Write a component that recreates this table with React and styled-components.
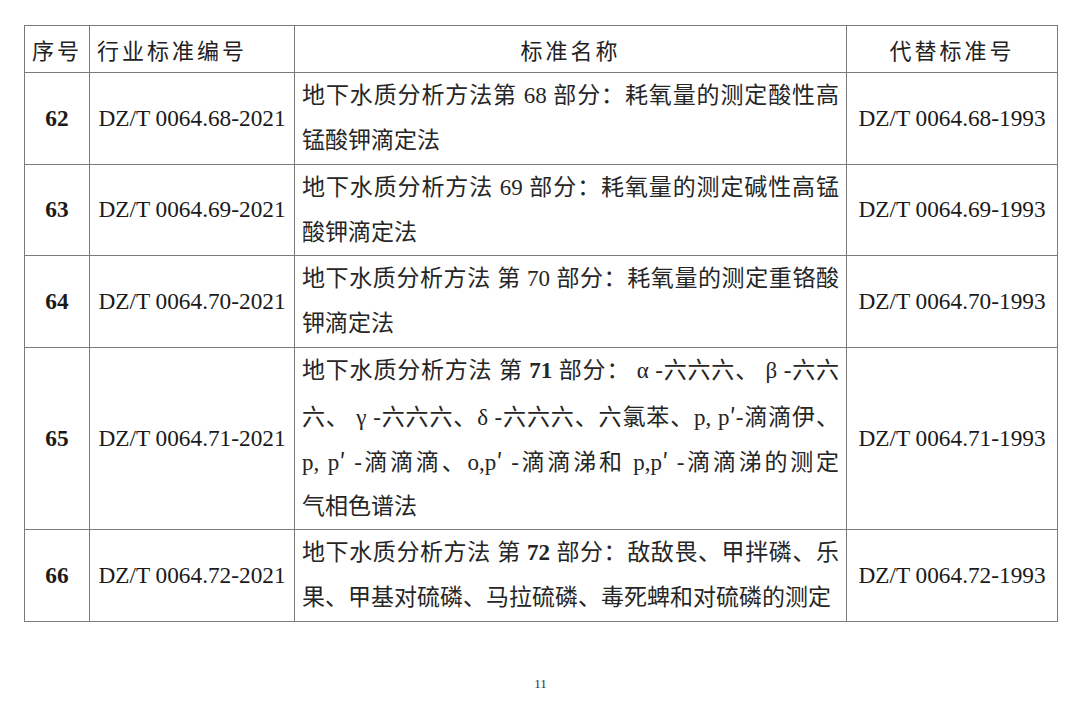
import React from "react";
import styled, { createGlobalStyle } from "styled-components";

const GlobalStyle = createGlobalStyle`
  html, body {
    margin: 0;
    padding: 0;
    background: #ffffff;
  }
  body {
    font-family: "Liberation Serif", "Noto Sans CJK SC", serif;
    color: #1a1a1a;
  }
`;

const Page = styled.div`
  width: 1080px;
  height: 707px;
  padding: 25px 0 0 24px;
  box-sizing: border-box;
  display: flex;
  flex-direction: column;
`;

const Table = styled.table`
  border-collapse: collapse;
  width: 1033px;
  table-layout: fixed;
  border: 1.5px solid #6a6a6a;
`;

const Cell = styled.td`
  border: 1px solid #7a7a7a;
  padding: 0 ${(p) => (p.$pad ? "7px" : "0")};
  font-size: 23.3px;
  line-height: 45px;
  text-align: ${(p) => p.$align || "center"};
  font-weight: ${(p) => (p.$bold ? 700 : 400)};
  vertical-align: middle;
  white-space: nowrap;
`;

const HeadCell = styled.th`
  border: 1px solid #7a7a7a;
  height: 46px;
  padding: 0 ${(p) => (p.$align === "left" ? "7px" : "0")};
  font-family: "Noto Sans CJK SC", sans-serif;
  font-weight: 400;
  font-size: 22px;
  letter-spacing: 3px;
  color: #222;
  text-align: ${(p) => p.$align || "center"};
`;

const Line = styled.div`
  height: 45.3px;
  line-height: 45px;
  font-size: 23px;
  text-align: left;
  text-align-last: ${(p) => (p.$full ? "justify" : "left")};
  color: #262626;
`;

const Num = styled.span`
  font-weight: ${(p) => (p.$bold ? 700 : 400)};
`;

const Wide = styled.span`
  font-family: "Noto Sans CJK SC", sans-serif;
`;

const PageNo = styled.div`
  width: 1033px;
  margin-top: 54px;
  text-align: center;
  font-size: 13px;
  color: #333;
`;

const P = () => <Wide>′</Wide>;

const rows = [
  {
    no: "62",
    code: "DZ/T 0064.68-2021",
    old: "DZ/T 0064.68-1993",
    lines: [
      <>地下水质分析方法第 <Num>68</Num> 部分：耗氧量的测定酸性高</>,
      <>锰酸钾滴定法</>,
    ],
  },
  {
    no: "63",
    code: "DZ/T 0064.69-2021",
    old: "DZ/T 0064.69-1993",
    lines: [
      <>地下水质分析方法  <Num>69</Num> 部分：耗氧量的测定碱性高锰</>,
      <>酸钾滴定法</>,
    ],
  },
  {
    no: "64",
    code: "DZ/T 0064.70-2021",
    old: "DZ/T 0064.70-1993",
    lines: [
      <>地下水质分析方法  第 <Num>70</Num> 部分：耗氧量的测定重铬酸</>,
      <>钾滴定法</>,
    ],
  },
  {
    no: "65",
    code: "DZ/T 0064.71-2021",
    old: "DZ/T 0064.71-1993",
    lines: [
      <>地下水质分析方法  第 <Num $bold>71</Num> 部分：  α -六六六、  β -六六</>,
      <>六、   γ -六六六、δ -六六六、六氯苯、p, p<P />-滴滴伊、</>,
      <>p, p<P /> -滴滴滴、o,p<P /> -滴滴涕和 p,p<P /> -滴滴涕的测定</>,
      <>气相色谱法</>,
    ],
  },
  {
    no: "66",
    code: "DZ/T 0064.72-2021",
    old: "DZ/T 0064.72-1993",
    lines: [
      <>地下水质分析方法  第 <Num $bold>72</Num> 部分：敌敌畏、甲拌磷、乐</>,
      <>果、甲基对硫磷、马拉硫磷、毒死蜱和对硫磷的测定</>,
    ],
  },
];

export default function App() {
  return (
    <>
      <GlobalStyle />
      <Page>
        <Table>
          <colgroup>
            <col style={{ width: 65 }} />
            <col style={{ width: 205 }} />
            <col style={{ width: 552 }} />
            <col style={{ width: 211 }} />
          </colgroup>
          <thead>
            <tr>
              <HeadCell>序号</HeadCell>
              <HeadCell $align="left">行业标准编号</HeadCell>
              <HeadCell>标准名称</HeadCell>
              <HeadCell>代替标准号</HeadCell>
            </tr>
          </thead>
          <tbody>
            {rows.map((r) => (
              <tr key={r.no}>
                <Cell $bold>{r.no}</Cell>
                <Cell>{r.code}</Cell>
                <Cell $pad>
                  {r.lines.map((line, i) => (
                    <Line key={i} $full={i < r.lines.length - 1}>
                      {line}
                    </Line>
                  ))}
                </Cell>
                <Cell>{r.old}</Cell>
              </tr>
            ))}
          </tbody>
        </Table>
        <PageNo>11</PageNo>
      </Page>
    </>
  );
}
